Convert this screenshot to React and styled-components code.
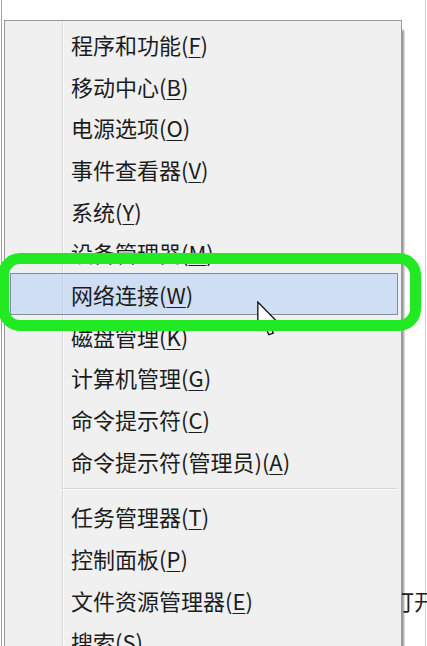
import styled, { createGlobalStyle } from "styled-components"

const Global = createGlobalStyle`
  html, body {
    margin: 0;
    padding: 0;
    background: #ffffff;
  }
  body {
    font-family: "Noto Sans CJK SC", "Noto Sans", sans-serif;
  }
`

const Desktop = styled.div`
  position: relative;
  width: 427px;
  height: 646px;
  padding-left: 1px;
  box-sizing: border-box;
  overflow: hidden;
  background: #ffffff;
`

const Window = styled.div`
  display: flex;
  flex-direction: column;
  align-items: flex-start;
  height: 100%;
  width: 425px;
  box-sizing: border-box;
  border-left: 1px solid #a2a2a2;
  border-right: 1px solid #d2d2d2;
  padding: 20px 0 0 2px;
`

const BehindText = styled.span`
  position: absolute;
  left: 392px;
  top: 584px;
  font-size: 22px;
  color: #222;
  line-height: 32px;
  white-space: nowrap;
`

const Menu = styled.div`
  position: relative;
  display: flex;
  flex-direction: column;
  flex-shrink: 0;
  width: 398px;
  box-sizing: border-box;
  border: 1px solid #989898;
  padding: 2px 0 0 0;
  background:
    linear-gradient(to right,
      transparent 57px, #d9d9d9 57px, #d9d9d9 58px,
      #fbfbfb 58px, #fbfbfb 59px, transparent 59px),
    #f0f0f0;
  box-shadow: 4px 8px 2px -2px rgba(0, 0, 0, 0.42);
`

const Item = styled.div`
  height: 41.7px;
  flex-shrink: 0;
  box-sizing: border-box;
  margin: 0 3px 0 5px;
  padding-left: 60px;
  display: flex;
  align-items: center;
  font-size: 22px;
  color: #1c1c1c;
  white-space: nowrap;
  border: 1px solid ${p => (p.$active ? "#7d8ea6" : "transparent")};
  background: ${p => (p.$active ? "rgba(150, 192, 246, 0.36)" : "transparent")};
`

const Key = styled.span`
  text-decoration: underline;
  text-underline-offset: 3px;
  text-decoration-thickness: 1px;
`

const Separator = styled.div`
  height: 14px;
  flex-shrink: 0;
  margin: 0 3px 0 57px;
  display: flex;
  align-items: center;
  &::after {
    content: "";
    flex: 1;
    height: 1px;
    background: #d6d6d6;
    box-shadow: 0 1px 0 #fcfcfc;
  }
`

const Cursor = styled.svg`
  position: absolute;
  left: 257px;
  top: 301px;
  width: 22px;
  height: 36px;
`

const Marker = styled.div`
  position: absolute;
  left: -2px;
  top: 253px;
  width: 423px;
  height: 78px;
  box-sizing: border-box;
  border: 11px solid #22ea22;
  border-radius: 22px;
`

const first = [
  ["程序和功能", "F"],
  ["移动中心", "B"],
  ["电源选项", "O"],
  ["事件查看器", "V"],
  ["系统", "Y"],
  ["设备管理器", "M"],
  ["网络连接", "W"],
  ["磁盘管理", "K"],
  ["计算机管理", "G"],
  ["命令提示符", "C"],
  ["命令提示符(管理员)", "A"],
]

const second = [
  ["任务管理器", "T"],
  ["控制面板", "P"],
  ["文件资源管理器", "E"],
  ["搜索", "S"],
]

function Entry({ label, k, active }) {
  return (
    <Item $active={active}>
      {label}(<Key>{k}</Key>)
    </Item>
  )
}

export default function App() {
  return (
    <>
      <Global />
      <Desktop>
        <BehindText>打开</BehindText>
        <Window>
          <Menu>
            {first.map(([label, k]) => (
              <Entry key={k} label={label} k={k} active={k === "W"} />
            ))}
            <Separator />
            {second.map(([label, k]) => (
              <Entry key={k} label={label} k={k} />
            ))}
          </Menu>
        </Window>
        <Cursor viewBox="0 0 13 21">
          <path
            d="M0.5 0.5 L0.5 17 L4.3 13.3 L7 19.8 L9.6 18.8 L7 12.4 L12.2 12.4 Z"
            fill="#ffffff"
            stroke="#111"
            strokeWidth="0.8"
            strokeLinejoin="miter"
          />
        </Cursor>
        <Marker />
      </Desktop>
    </>
  )
}
